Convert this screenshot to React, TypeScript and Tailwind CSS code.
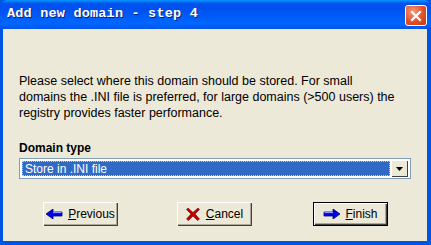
const face = "bg-[#ECE9D8]";

function ArrowLeft() {
  return (
    <svg width="17" height="10" viewBox="0 0 17 10" className="mr-[5px]">
      <path d="M0 5 L7 0 L7 3 L16 3 L16 7 L7 7 L7 10 Z" fill="#0000E0" stroke="#000080" strokeWidth="0.8" />
      <path d="M7 3.6 L15.5 3.6" stroke="#9AA8FF" strokeWidth="1" />
    </svg>
  );
}

function ArrowRight() {
  return (
    <svg width="17" height="10" viewBox="0 0 17 10" className="mr-[5px]">
      <path d="M17 5 L10 0 L10 3 L1 3 L1 7 L10 7 L10 10 Z" fill="#0000E0" stroke="#000080" strokeWidth="0.8" />
      <path d="M1.5 3.6 L10 3.6" stroke="#9AA8FF" strokeWidth="1" />
    </svg>
  );
}

function RedX() {
  return (
    <svg width="14" height="14" viewBox="0 0 14 14" className="mr-[6px]">
      <path d="M2 1 L7 5.5 L12 1 L13.5 2.5 L9 7 L13.5 12 L11.5 13.5 L7 9 L2.5 13.5 L0.5 12 L5 7 L0.5 2.5 Z" fill="#C00000" stroke="#700000" strokeWidth="0.6" />
    </svg>
  );
}

function Btn({ icon, label, under, rest, def }: { icon: React.ReactNode; label: string; under: string; rest: string; def?: boolean }) {
  return (
    <button
      type="button"
      className={`w-[75px] h-[24px] flex items-center justify-center ${face} text-[12px] text-black ${
        def
          ? "border border-black shadow-[inset_1px_1px_0_#fff,inset_-1px_-1px_0_#404040,inset_-2px_-2px_0_#ACA899]"
          : "shadow-[inset_1px_1px_0_#fff,inset_-1px_-1px_0_#404040,inset_-2px_-2px_0_#ACA899]"
      }`}
      aria-label={label}
    >
      {icon}
      <span>
        <span className="underline">{under}</span>
        {rest}
      </span>
    </button>
  );
}

export default function App() {
  return (
    <div className="w-[431px] h-[245px] flex flex-col bg-[#0054E3] font-['Liberation_Sans',Arial,sans-serif] overflow-hidden">
      <div className="h-[29px] shrink-0 flex items-center justify-between pl-[7px] pr-[4px] rounded-t-[7px] bg-[linear-gradient(180deg,#0997FF_0%,#0053EE_12%,#0050EE_30%,#0066FF_80%,#0055E8_100%)]">
        <span className="font-['Liberation_Mono',monospace] font-bold text-[13.5px] text-white [text-shadow:1px_1px_0_#0A1F7A] tracking-[0.2px]">
          Add new domain - step 4
        </span>
        <div className="w-[22px] h-[21px] mt-[2px] rounded-[3px] border border-white bg-[radial-gradient(circle_at_35%_30%,#F49C7E,#E0502A_55%,#C23A14)] flex items-center justify-center">
          <svg width="12" height="12" viewBox="0 0 12 12">
            <path d="M2 2 L10 10 M10 2 L2 10" stroke="white" strokeWidth="2.2" strokeLinecap="square" />
          </svg>
        </div>
      </div>
      <div className={`flex-1 mx-[3px] mb-[4px] mr-[4px] ${face} flex flex-col px-[16px]`}>
        <p className="mt-[44px] text-[12.5px] leading-[16px] text-black whitespace-nowrap">
          Please select where this domain should be stored. For small
          <br />
          domains the .INI file is preferred, for large domains (&gt;500 users) the
          <br />
          registry provides faster performance.
        </p>
        <div className="mt-[20px] font-bold text-[12px] text-black leading-[14px]">Domain type</div>
        <div className="mt-[3px] w-[392px] h-[21px] bg-white border border-[#7F9DB9] flex items-center p-[2px]">
          <div className="flex-1 h-full bg-[#316AC5] border border-dotted border-[#E8D060] flex items-center pl-[2px] text-[12px] text-white">
            Store in .INI file
          </div>
          <div className="w-[17px] h-[17px] ml-[1px] bg-[#ECE9D8] shadow-[inset_1px_1px_0_#fff,inset_-1px_-1px_0_#404040] flex items-center justify-center">
            <svg width="7" height="4" viewBox="0 0 7 4">
              <path d="M0 0 L7 0 L3.5 4 Z" fill="black" />
            </svg>
          </div>
        </div>
        <div className="mt-[23px] flex items-center">
          <div className="ml-[24px]">
            <Btn icon={<ArrowLeft />} label="Previous" under="P" rest="revious" />
          </div>
          <div className="ml-[59px]">
            <Btn icon={<RedX />} label="Cancel" under="C" rest="ancel" />
          </div>
          <div className="ml-[61px]">
            <Btn icon={<ArrowRight />} label="Finish" under="F" rest="inish" def />
          </div>
        </div>
      </div>
    </div>
  );
}
